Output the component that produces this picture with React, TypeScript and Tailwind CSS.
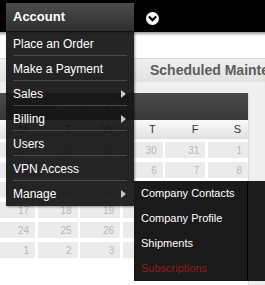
import React from 'react';

const font = { fontFamily: '"Liberation Sans", Arial, sans-serif' };

const mainItems = [
  { label: 'Place an Order' },
  { label: 'Make a Payment' },
  { label: 'Sales', sub: true },
  { label: 'Billing', sub: true },
  { label: 'Users' },
  { label: 'VPN Access' },
  { label: 'Manage', sub: true },
];

const subItems = ['Company Contacts', 'Company Profile', 'Shipments', 'Subscriptions'];

const dayNames = ['M', 'T', 'W', 'T', 'F', 'S'];

const weeks = [
  [27, 28, 29, 30, 31, 1],
  [3, 4, 5, 6, 7, 8],
  [10, 11, 12, 13, 14, 15],
  [17, 18, 19, 20, 21, 22],
  [24, 25, 26, 27, 28, 29],
  [1, 2, 3, 4, 5, 6],
];

const Arrow = () => (
  <svg width="5" height="8" viewBox="0 0 5 8" className="absolute right-[8px] top-[9px]">
    <polygon points="0,0 5,4 0,8" fill="#c8c8c8" />
  </svg>
);

const ChevronCircle = () => (
  <svg width="13" height="13" viewBox="0 0 13 13">
    <circle cx="6.5" cy="6.5" r="6.5" fill="#fff" />
    <polyline points="3.6,5.2 6.5,8.1 9.4,5.2" fill="none" stroke="#000" strokeWidth="2.2" strokeLinecap="square" />
  </svg>
);

function AccountMenu() {
  return (
    <div className="relative w-[128px] mt-[3px] h-[28px] z-10">
      <div className="h-full flex items-center pl-[7px] bg-gradient-to-b from-[#4c4c4c] to-[#2f2f2f] text-white font-bold text-[13px]">
        Account
      </div>
      <div className="absolute left-0 top-[28px] w-[128px] bg-[#141414]/[0.93] shadow-[1px_1px_2px_rgba(0,0,0,0.4)]">
        {mainItems.map((item, i) => (
          <div key={item.label} className="relative h-[25px] px-[7px]">
            <div
              className={`h-full flex items-center pt-[1px] text-white text-[12px] ${
                i < mainItems.length - 1 ? 'border-b border-[#4a4a4a]' : ''
              }`}
            >
              {item.label}
            </div>
            {item.sub && <Arrow />}
          </div>
        ))}
        <div className="absolute left-[128px] top-[150px] w-[131px] h-[100px] flex bg-[#1a1a1a]">
          <div className="w-[114px] border-r border-black">
            {subItems.map((s) => (
              <div
                key={s}
                className={`h-[25px] flex items-center pl-[7px] text-[11px] ${
                  s === 'Subscriptions' ? 'text-[#931d1d]' : 'text-white'
                }`}
              >
                {s}
              </div>
            ))}
          </div>
          <div className="flex-1 bg-[#1c1c1c]" />
        </div>
      </div>
    </div>
  );
}

export default function App() {
  return (
    <div className="w-[265px] h-[285px] overflow-hidden bg-[#efefef]" style={font}>
      <div className="h-[32px] bg-black flex items-start pl-[6px]">
        <AccountMenu />
        <div className="ml-[12px] mt-[12px]">
          <ChevronCircle />
        </div>
      </div>
      <div className="h-[4px] bg-gradient-to-b from-[#9c9c9c] to-white" />
      <div className="h-[22px] bg-white" />
      <div className="h-[24px] border-t border-[#d8d8d8] bg-gradient-to-b from-[#f0f0f0] to-[#e2e2e2] flex items-center pl-[150px] whitespace-nowrap overflow-hidden">
        <span className="text-[14px] font-bold text-[#5c5c5c]">Scheduled Maintenance</span>
      </div>
      <div className="pt-[11px] flex">
        <div className="w-[248px] bg-white h-[200px]">
          <div className="h-[27px] bg-gradient-to-b from-[#4b4b4b] to-[#383838] flex items-center pl-[55px] text-[11px] text-[#a8a8a8]">
            November 2014
          </div>
          <div className="h-[19px] bg-gradient-to-b from-[#fbfbfb] to-[#e1e1e1] grid grid-cols-[35px_repeat(5,40px)] gap-x-[2.6px]">
            {dayNames.map((d, i) => (
              <div key={i} className="flex items-center justify-end pr-[7px] text-[11px] text-[#333]">
                {d}
              </div>
            ))}
          </div>
          <div className="pt-[3px] grid grid-cols-[35px_repeat(5,40px)] gap-x-[2.6px] gap-y-[4px]">
            {weeks.flatMap((w, r) =>
              w.map((n, c) => (
                <div
                  key={`${r}-${c}`}
                  className="h-[16px] bg-[#ebebeb] flex items-center justify-end pr-[6px] text-[10px] text-[#b8b8b8]"
                >
                  {n}
                </div>
              ))
            )}
          </div>
        </div>
        <div className="flex-1 border-l border-[#dcdcdc]" />
      </div>
    </div>
  );
}
